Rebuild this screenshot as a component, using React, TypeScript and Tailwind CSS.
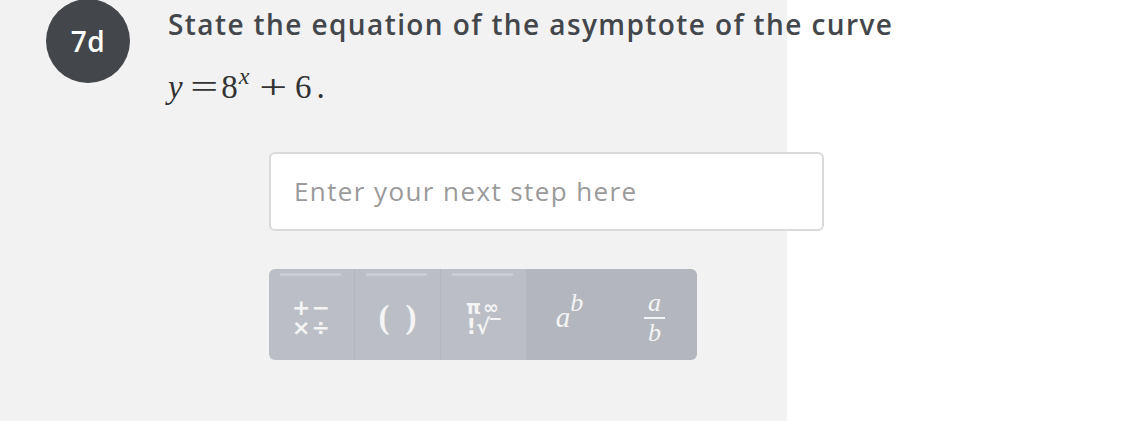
import React from "react";

const sans = { fontFamily: "'Open Sans', 'Noto Sans', sans-serif" };
const serif = { fontFamily: "'Liberation Serif', 'DejaVu Serif', serif" };
const dejavu = { fontFamily: "'DejaVu Sans', sans-serif" };

function KeyButton({ children, dark, line }: { children: React.ReactNode; dark?: boolean; line?: boolean }) {
  return (
    <div
      className={`relative flex h-full flex-1 items-center justify-center ${
        dark ? "bg-[#b3b7bd]" : "bg-[#bbbfc5] border-r border-[#b3b7bd]"
      }`}
    >
      {line && <div className="absolute left-[11px] right-[13px] top-[4px] h-[3px] bg-[#c9ccd1]" />}
      {children}
    </div>
  );
}

export default function App() {
  return (
    <div className="flex h-[421px] w-[1125px] bg-white">
      <div className="flex h-full w-[787px] bg-[#f2f2f2]">
        {/* badge */}
        <div className="ml-[46px] mt-[-1px] flex h-[84px] w-[84px] shrink-0 items-center justify-center rounded-full bg-[#43464a]">
          <span className="text-[28px] font-semibold tracking-[0.5px] text-white" style={sans}>
            7d
          </span>
        </div>

        <div className="ml-[38px] flex flex-col">
          <div
            className="mt-[5px] whitespace-nowrap text-[28px] font-semibold leading-[38px] tracking-[1.4px] text-[#43464a]"
            style={sans}
          >
            State the equation of the asymptote of the curve
          </div>
          <div className="mt-[22px] flex h-[44px] items-baseline whitespace-nowrap text-[33px] leading-[44px] text-[#333]" style={serif}>
            <i>y</i>
            <span className="ml-[12px] inline-block scale-x-[1.5]">=</span>
            <span className="ml-[8px]">8</span>
            <i className="relative top-[-14px] ml-[1px] text-[24px]">x</i>
            <span className="ml-[15px] inline-block scale-x-[1.5]">+</span>
            <span className="ml-[12px]">6</span>
            <span className="ml-[5px]">.</span>
          </div>

          {/* input */}
          <div className="ml-[101px] mt-[43px] flex h-[79px] w-[555px] items-center rounded-[6px] border-2 border-[#dadada] bg-white pl-[23px]">
            <span className="text-[26px] tracking-[1.4px] text-[#9a9a9a]" style={sans}>
              Enter your next step here
            </span>
          </div>

          {/* keypad */}
          <div className="ml-[101px] mt-[38px] flex h-[91px] w-[428px] overflow-hidden rounded-[6px]">
            <KeyButton line>
              <div className="mt-[6px] flex flex-col items-center text-[#f4f4f4]" style={dejavu}>
                <span className="text-[22px] font-bold leading-[20px] tracking-[1px]">+−</span>
                <span className="text-[22px] font-bold leading-[20px] tracking-[1px]">×÷</span>
              </div>
            </KeyButton>
            <KeyButton line>
              <div className="mt-[4px] flex gap-[16px] text-[33px] font-bold leading-[40px] text-[#f4f4f4]" style={serif}>
                <span>(</span>
                <span>)</span>
              </div>
            </KeyButton>
            <KeyButton line>
              <div className="mt-[6px] flex flex-col items-center text-[#f4f4f4]" style={dejavu}>
                <span className="text-[19px] font-bold leading-[19px] tracking-[2px]">π∞</span>
                <span className="text-[21px] font-bold leading-[21px]">!√‾</span>
              </div>
            </KeyButton>
            <KeyButton dark>
              <span className="mt-[6px] flex items-baseline italic text-[#f4f4f4]" style={serif}>
                <span className="text-[29px]">a</span>
                <span className="relative top-[-16px] text-[26px]">b</span>
              </span>
            </KeyButton>
            <KeyButton dark>
              <div className="mt-[6px] flex flex-col items-center italic leading-none text-[#f4f4f4]" style={serif}>
                <span className="text-[26px] leading-[22px]">a</span>
                <div className="my-[3px] h-[2px] w-[21px] bg-[#f4f4f4]" />
                <span className="text-[26px] leading-[22px]">b</span>
              </div>
            </KeyButton>
          </div>
        </div>
      </div>
    </div>
  );
}
